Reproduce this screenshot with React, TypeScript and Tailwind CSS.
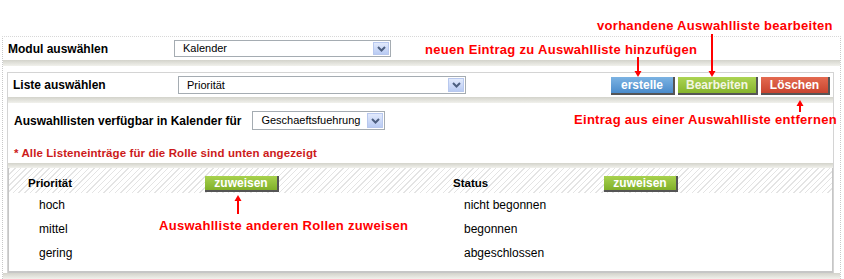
import type { ReactNode } from "react";

const font = "font-['Liberation_Sans',Arial,sans-serif]";

function SelectBox({ value, width, height }: { value: string; width: string; height: string }) {
  return (
    <div className={`relative flex items-center bg-white border border-[#a5acb2] ${width} ${height}`}>
      <span className="pl-[8px] text-[11px] text-black leading-none">{value}</span>
      <div className="absolute right-[1px] top-[1px] bottom-[1px] w-[16px] flex items-center justify-center border border-[#b8c8ee] bg-linear-to-b from-[#e2eafc] to-[#b9cbf3]">
        <svg width="9" height="6" viewBox="0 0 9 6">
          <path d="M1 1 L4.5 4.5 L8 1" fill="none" stroke="#4d5f80" strokeWidth="2" />
        </svg>
      </div>
    </div>
  );
}

function Btn({ children, className }: { children: ReactNode; className: string }) {
  return (
    <div
      className={`flex items-center justify-center font-bold text-[12px] leading-none border-r-2 border-b-2 border-[#555] ${className}`}
    >
      {children}
    </div>
  );
}

function Bar({ h = "h-[6px]" }: { h?: string }) {
  return <div className={`${h} bg-linear-to-b from-[#d3d3cb] to-[#f1f1ec]`} />;
}

function Arrow({ x, y, h, up }: { x: number; y: number; h: number; up?: boolean }) {
  return (
    <svg
      className="absolute"
      style={{ left: x - 4, top: y }}
      width="8"
      height={h}
      viewBox={`0 0 8 ${h}`}
    >
      {up ? (
        <>
          <polygon points={`4,0 0.5,6 7.5,6`} fill="#ff0000" />
          <rect x="3" y="5" width="2" height={h - 5} fill="#ff0000" />
        </>
      ) : (
        <>
          <rect x="3" y="0" width="2" height={h - 5} fill="#ff0000" />
          <polygon points={`0.5,${h - 6} 7.5,${h - 6} 4,${h}`} fill="#ff0000" />
        </>
      )}
    </svg>
  );
}

function Note({ children, className }: { children: ReactNode; className: string }) {
  return (
    <div
      className={`absolute whitespace-nowrap text-[13px] leading-[16px] font-bold tracking-[0.3px] text-[#ff0000] ${className}`}
    >
      {children}
    </div>
  );
}

export default function App() {
  const left = ["hoch", "mittel", "gering"];
  const right = ["nicht begonnen", "begonnen", "abgeschlossen"];

  return (
    <div className={`relative w-[844px] h-[279px] overflow-hidden bg-white pt-[36px] text-black ${font}`}>
      <div className="ml-[2px] w-[839px] border-t border-t-[#d8d8d8] border-l border-r border-dotted border-l-[#c8c8c8] border-r-[#c8c8c8]">
        {/* Modul */}
        <div className="flex items-center h-[23px] pl-[5px]">
          <div className="w-[166px] font-bold text-[12px]">Modul auswählen</div>
          <SelectBox value="Kalender" width="w-[217px]" height="h-[17px]" />
        </div>
        <Bar />
        <div className="h-[6px]" />

        <div className="ml-[4px] w-[827px] border-t border-l border-r border-[#d4d4d4]">
          {/* Liste */}
          <div className="flex items-center h-[24px] pl-[5px] pr-[3px]">
            <div className="w-[165px] font-bold text-[12px]">Liste auswählen</div>
            <SelectBox value="Priorität" width="w-[288px]" height="h-[18px]" />
            <div className="ml-auto flex items-center gap-[3px] mt-[2px]">
              <Btn className="w-[64px] h-[18px] text-white bg-linear-to-b from-[#7cb3e3] to-[#4a8bcb]">erstelle</Btn>
              <Btn className="w-[80px] h-[18px] text-[#f4f6e2] bg-linear-to-b from-[#acd452] to-[#86b42c]">Bearbeiten</Btn>
              <Btn className="w-[69px] h-[18px] text-white bg-linear-to-b from-[#e46a50] to-[#c8432e]">Löschen</Btn>
            </div>
          </div>
          <Bar />

          <div className="pt-[8px] pl-[6px]">
            <div className="flex items-center h-[19px]">
              <div className="font-bold text-[12px]">Auswahllisten verfügbar in Kalender für</div>
              <div className="ml-[11px]">
                <SelectBox value="Geschaeftsfuehrung" width="w-[133px]" height="h-[19px]" />
              </div>
            </div>
            <div className="mt-[16px] mb-[3px] h-[14px] leading-[14px] text-[11.5px] tracking-[0.1px] font-bold text-[#cc1a1a]">
              * Alle Listeneinträge für die Rolle sind unten angezeigt
            </div>
          </div>
          <Bar h="h-[5px]" />

          {/* List box */}
          <div className="border-l border-r border-b-2 border-[#c6c6c6] pb-[6px]">
            <div className="h-[25px] pt-[8px] pl-[19px] bg-[repeating-linear-gradient(135deg,#e4e4e4_0px,#e4e4e4_1px,#ffffff_1px,#ffffff_4px)]">
              <div className="flex items-center h-[16px]">
                <div className="w-[177px] font-bold text-[11.5px]">Priorität</div>
                <Btn className="w-[74px] h-[16px] text-white bg-linear-to-b from-[#a8d24e] to-[#80b028]">zuweisen</Btn>
                <div className="w-[174px]" />
                <div className="w-[151px] font-bold text-[11.5px]">Status</div>
                <Btn className="w-[74px] h-[16px] text-white bg-linear-to-b from-[#a8d24e] to-[#80b028]">zuweisen</Btn>
              </div>
            </div>
            <div className="flex pl-[30px]">
              <div className="w-[425px]">
                {left.map((t) => (
                  <div key={t} className="h-[24px] flex items-center text-[12px]">
                    {t}
                  </div>
                ))}
              </div>
              <div>
                {right.map((t) => (
                  <div key={t} className="h-[24px] flex items-center text-[12px]">
                    {t}
                  </div>
                ))}
              </div>
            </div>
          </div>
        </div>
        <Bar />
      </div>

      {/* annotations */}
      <Note className="left-[597px] top-[18px]">vorhandene Auswahlliste bearbeiten</Note>
      <Note className="left-[425px] top-[42px]">neuen Eintrag zu Auswahlliste hinzufügen</Note>
      <Note className="left-[574px] top-[112px]">Eintrag aus einer Auswahlliste entfernen</Note>
      <Note className="left-[159px] top-[218px]">Auswahlliste anderen Rollen zuweisen</Note>
      <Arrow x={638} y={57} h={20} />
      <Arrow x={712} y={34} h={43} />
      <Arrow x={800} y={100} h={12} up />
      <Arrow x={238} y={195} h={19} up />
    </div>
  );
}
